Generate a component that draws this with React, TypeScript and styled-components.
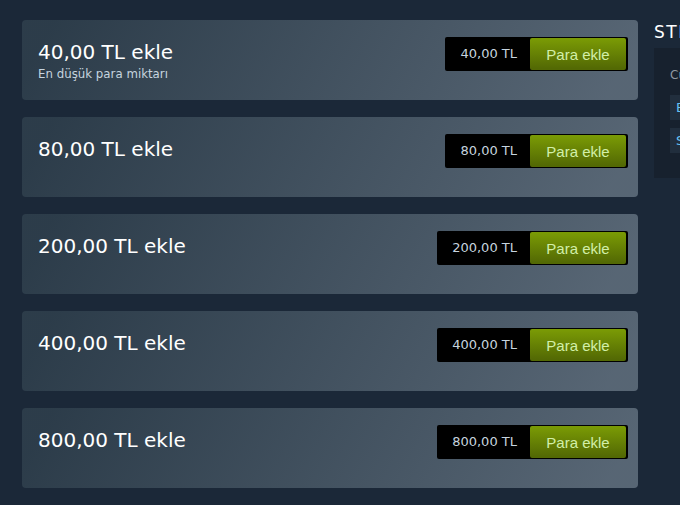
import React from "react";
import styled, { createGlobalStyle } from "styled-components";

const Global = createGlobalStyle`
  html, body { margin: 0; padding: 0; background: #1b2838; }
  body { font-family: "DejaVu Sans", "Noto Sans", Arial, sans-serif; overflow: hidden; }
`;

const Page = styled.div`
  display: flex;
  align-items: flex-start;
  padding: 20px 0 0 22px;
  width: 680px;
  height: 505px;
  box-sizing: border-box;
  overflow: hidden;
`;

const Column = styled.div`
  display: flex;
  flex-direction: column;
  gap: 17px;
  width: 616px;
  flex: none;
`;

const Card = styled.div`
  height: 80px;
  box-sizing: border-box;
  border-radius: 4px;
  background: linear-gradient(-60deg, rgba(226, 244, 255, 0.3) 5%, rgba(84, 107, 115, 0.3) 95%);
  display: flex;
  justify-content: space-between;
  align-items: flex-start;
  padding: 17px 10px 0 16px;
`;

const TextBlock = styled.div`
  display: flex;
  flex-direction: column;
  padding-top: 2px;
`;

const Title = styled.div`
  color: #ffffff;
  font-size: 20px;
  line-height: 26px;
  font-weight: 400;
`;

const Sub = styled.div`
  color: #c6d4df;
  font-size: 11.8px;
  line-height: 14px;
  margin-top: 2px;
`;

const BuyGroup = styled.div`
  display: flex;
  align-items: center;
  background: #000000;
  border-radius: 2px;
  padding: 2px;
  height: 34px;
  box-sizing: border-box;
`;

const Price = styled.div`
  color: #c6d4df;
  font-size: 13px;
  padding: 0 13px 0 13px;
  line-height: 30px;
  white-space: nowrap;
`;

const GreenButton = styled.button`
  border: none;
  width: 96px;
  height: 32px;
  border-radius: 2px;
  background: linear-gradient(to bottom, #799905 5%, #536904 95%);
  color: #d2efa9;
  font-family: "Liberation Sans", Arial, sans-serif;
  font-size: 15px;
  padding: 0;
  cursor: pointer;
`;

const Sidebar = styled.div`
  margin-left: 16px;
  width: 300px;
  flex: none;
  display: flex;
  flex-direction: column;
`;

const SideTitle = styled.div`
  color: #ffffff;
  font-size: 17px;
  letter-spacing: 1.5px;
  text-transform: uppercase;
  line-height: 20px;
  margin-top: 2px;
  white-space: nowrap;
`;

const SideBox = styled.div`
  margin-top: 6px;
  background: #17212e;
  height: 130px;
  box-sizing: border-box;
  padding: 20px 16px;
  display: flex;
  flex-direction: column;
  gap: 8px;
`;

const SideText = styled.div`
  color: #8f98a0;
  font-size: 12px;
  line-height: 14px;
  margin-bottom: 5px;
  white-space: nowrap;
`;

const SideLink = styled.div`
  background: #212e3d;
  color: #66c0f4;
  font-size: 13px;
  height: 25px;
  line-height: 25px;
  padding: 0 6px;
  white-space: nowrap;
`;

const amounts = [
  { v: "40,00", sub: "En düşük para miktarı" },
  { v: "80,00" },
  { v: "200,00" },
  { v: "400,00" },
  { v: "800,00" },
];

export default function App() {
  return (
    <>
      <Global />
      <Page>
        <Column>
          {amounts.map((a) => (
            <Card key={a.v}>
              <TextBlock>
                <Title>{a.v} TL ekle</Title>
                {a.sub && <Sub>{a.sub}</Sub>}
              </TextBlock>
              <BuyGroup>
                <Price>{a.v} TL</Price>
                <GreenButton>Para ekle</GreenButton>
              </BuyGroup>
            </Card>
          ))}
        </Column>
        <Sidebar>
          <SideTitle>Steam Cüzdanı</SideTitle>
          <SideBox>
            <SideText>Cüzdan bakiyeniz</SideText>
            <SideLink>Bakiye geçmişi</SideLink>
            <SideLink>Steam cüzdan kodu kullan</SideLink>
          </SideBox>
        </Sidebar>
      </Page>
    </>
  );
}
